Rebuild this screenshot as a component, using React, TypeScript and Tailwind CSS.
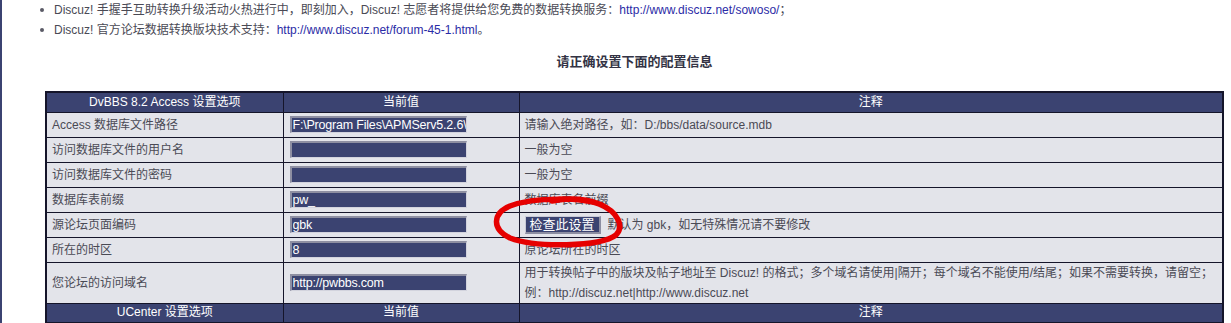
import React from "react"

// Discuz! 转换程序 - 配置信息页

const FONT = "font-['Liberation_Sans','Noto_Sans_CJK_SC',sans-serif]"

type Row = {
  label: string
  value: string
  note: React.ReactNode
  tall?: boolean
}

const ROWS: Row[] = [
  {
    label: "Access 数据库文件路径",
    value: "F:\\Program Files\\APMServ5.2.6\\",
    note: "请输入绝对路径，如：D:/bbs/data/source.mdb",
  },
  { label: "访问数据库文件的用户名", value: "", note: "一般为空" },
  { label: "访问数据库文件的密码", value: "", note: "一般为空" },
  { label: "数据库表前缀", value: "pw_", note: "数据库表名前缀" },
  {
    label: "源论坛页面编码",
    value: "gbk",
    note: (
      <span className="flex items-center">
        <button className="h-[18px] px-[4px] bg-[#3b4371] text-white text-[13px] leading-none border-t border-l border-[#c9cad6] border-b-2 border-r-2 border-b-[#8c8ea2] border-r-[#8c8ea2]">
          检查此设置
        </button>
        <span className="ml-[7px]">默认为 gbk，如无特殊情况请不要修改</span>
      </span>
    ),
  },
  { label: "所在的时区", value: "8", note: "原论坛所在的时区" },
  {
    label: "您论坛的访问域名",
    value: "http://pwbbs.com",
    tall: true,
    note: (
      <>
        用于转换帖子中的版块及帖子地址至 Discuz! 的格式；多个域名请使用|隔开；每个域名不能使用/结尾；如果不需要转换，请留空；
        <br />
        例：http://discuz.net|http://www.discuz.net
      </>
    ),
  },
]

function HeaderRow({ title }: { title: string }) {
  return (
    <tr className="h-[20px] bg-[#3b4371] text-white">
      <td className="border border-[#15152a] text-center leading-[17px]">{title}</td>
      <td className="border border-[#15152a] text-center leading-[17px]">当前值</td>
      <td className="border border-[#15152a] text-center leading-[17px]">注释</td>
    </tr>
  )
}

function ValueInput({ value }: { value: string }) {
  return (
    <input
      readOnly
      value={value}
      className={`${FONT} block w-[177px] h-[17px] pl-[1px] pr-0 py-0 bg-[#3b4371] text-white text-[12.5px] leading-[14px] tracking-[-0.2px] outline-none border-t-2 border-l-2 border-[#8e8fa2] border-b border-r border-b-[#d2d3dd] border-r-[#d2d3dd]`}
    />
  )
}

export default function App() {
  return (
    <div className={`${FONT} relative min-h-[323px] overflow-hidden bg-white border-l-2 border-[#3b4371] text-[12px] text-[#4a4a55]`}>
      <ul className="pl-[38px]">
        <li className="flex items-center h-[20px]">
          <span className="w-[4px] h-[4px] rounded-full bg-[#5a5a66]" />
          <span className="ml-[10px]">
            Discuz! 手握手互助转换升级活动火热进行中，即刻加入，Discuz! 志愿者将提供给您免费的数据转换服务：
            <a className="text-[#2b2ba6]">http://www.discuz.net/sowoso/</a>；
          </span>
        </li>
        <li className="flex items-center h-[20px]">
          <span className="w-[4px] h-[4px] rounded-full bg-[#5a5a66]" />
          <span className="ml-[10px]">
            Discuz! 官方论坛数据转换版块技术支持：
            <a className="text-[#2b2ba6]">http://www.discuz.net/forum-45-1.html</a>。
          </span>
        </li>
      </ul>

      <h3 className="mt-[12px] ml-[43px] w-[1179px] h-[20px] leading-[20px] text-center text-[13px] font-bold text-[#333344]">
        请正确设置下面的配置信息
      </h3>

      <table className="mt-[19px] ml-[43px] w-[1179px] table-fixed border-collapse border-2 border-[#15152a]">
        <colgroup>
          <col className="w-[237px]" />
          <col className="w-[236px]" />
          <col />
        </colgroup>
        <tbody>
          <HeaderRow title="DvBBS 8.2 Access 设置选项" />
          {ROWS.map(r => (
            <tr key={r.label} className={`${r.tall ? "h-[40px]" : "h-[25px]"} bg-[#e3e4ea]`}>
              <td className="border border-[#15152a] px-[5px]">{r.label}</td>
              <td className="border border-[#15152a] px-[6px]">
                <ValueInput value={r.value} />
              </td>
              <td className={`border border-[#15152a] px-[5px] ${r.tall ? "leading-[20px]" : ""}`}>
                {r.note}
              </td>
            </tr>
          ))}
          <HeaderRow title="UCenter 设置选项" />
        </tbody>
      </table>

      {/* hand-drawn red mark around the button */}
      <svg
        className="absolute left-[484px] top-[192px] pointer-events-none"
        width="142"
        height="62"
        viewBox="0 0 142 62"
      >
        <path
          d="M 116 13 C 96 5, 48 5, 24 14 C 7 21, 5 37, 24 46 C 50 56, 114 55, 130 43 C 138 35, 133 20, 113 12 C 100 7, 82 6, 66 9"
          fill="none"
          stroke="#e60000"
          strokeWidth="5.5"
          strokeLinecap="round"
        />
      </svg>
    </div>
  )
}
